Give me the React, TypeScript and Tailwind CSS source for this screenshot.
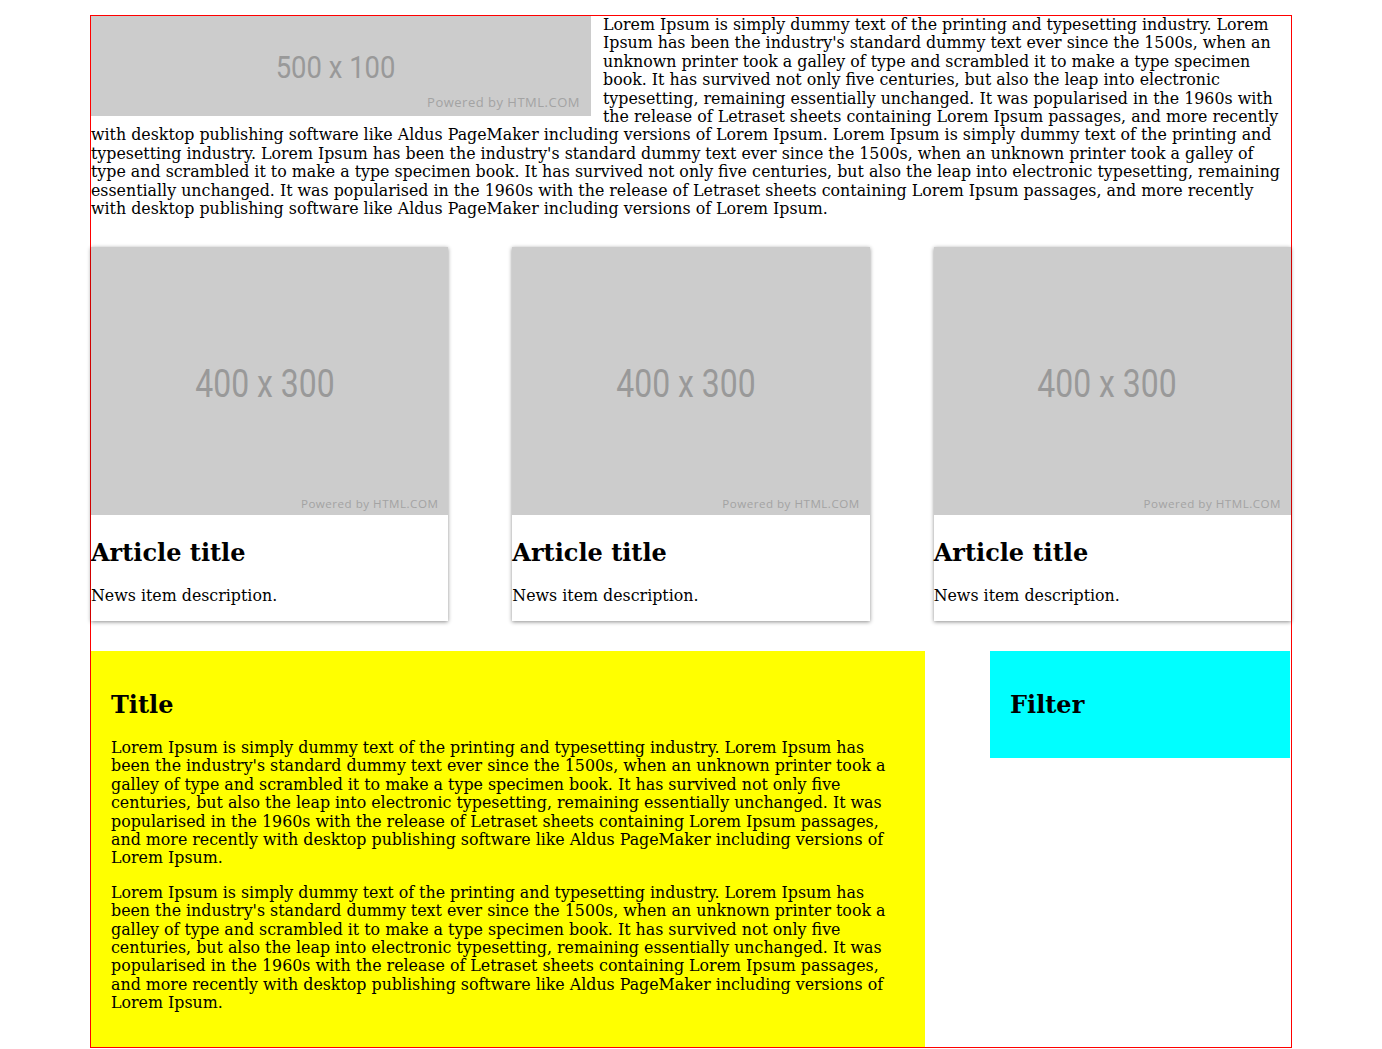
const lorem =
  "Lorem Ipsum is simply dummy text of the printing and typesetting industry. Lorem Ipsum has been the industry's standard dummy text ever since the 1500s, when an unknown printer took a galley of type and scrambled it to make a type specimen book. It has survived not only five centuries, but also the leap into electronic typesetting, remaining essentially unchanged. It was popularised in the 1960s with the release of Letraset sheets containing Lorem Ipsum passages, and more recently with desktop publishing software like Aldus PageMaker including versions of Lorem Ipsum."

function Placeholder({ label, big }: { label: string; big?: boolean }) {
  return (
    <div className="relative flex h-full w-full items-center justify-center bg-[#cccccc]">
      <span
        className={
          big
            ? "-translate-x-[5px] translate-y-[3px] scale-x-[0.84] font-['Roboto',sans-serif] text-[38px] leading-none text-[#999999]"
            : "-translate-x-[5px] translate-y-[2px] scale-x-[0.9] font-['Roboto',sans-serif] text-[30.5px] leading-none text-[#999999]"
        }
      >
        {label}
      </span>
      <span
        className={
          big
            ? "absolute right-[10px] bottom-[6px] font-['Open_Sans',sans-serif] text-[11.6px] leading-none tracking-[0.5px] text-[#a3a3a3]"
            : "absolute right-[11px] bottom-[7px] font-['Open_Sans',sans-serif] text-[13px] leading-none tracking-[0.5px] text-[#a3a3a3]"
        }
      >
        Powered by HTML.COM
      </span>
    </div>
  )
}

function Card() {
  return (
    <div className="bg-white shadow-[0_1px_4px_rgba(0,0,0,0.45)]">
      <div className="aspect-[4/3] w-full">
        <Placeholder label="400 x 300" big />
      </div>
      <h2 className="mt-[23px] mb-5 text-2xl font-bold leading-[normal]">Article title</h2>
      <p className="mb-[15px]">News item description.</p>
    </div>
  )
}

export default function App() {
  return (
    <div className="min-h-screen bg-white font-['DejaVu_Serif',serif] text-[15.84px] leading-[18.4px] text-black">
      <div className="mx-auto mt-[15px] w-[1202px] border border-[#ff0000]">
        <div className="mb-[29px]">
          <div className="float-left mr-3 h-[100px] w-[500px]">
            <Placeholder label="500 x 100" />
          </div>
          <p>
            {lorem} {lorem}
          </p>
        </div>

        <div className="grid grid-cols-3 gap-16">
          <Card />
          <Card />
          <Card />
        </div>

        <div className="mt-[30px] flex justify-between">
          <div className="w-[834px] bg-[#ffff00] px-5 pt-5 pb-[18px]">
            <h2 className="mt-[19px] mb-5 text-2xl font-bold leading-[normal]">Title</h2>
            <p className="mb-4">{lorem}</p>
            <p className="mb-4">{lorem}</p>
          </div>
          <div className="mr-px w-[300px] self-start bg-[#00ffff] p-5">
            <h2 className="mt-[19px] mb-[19px] text-2xl font-bold leading-[normal]">Filter</h2>
          </div>
        </div>
      </div>
    </div>
  )
}
